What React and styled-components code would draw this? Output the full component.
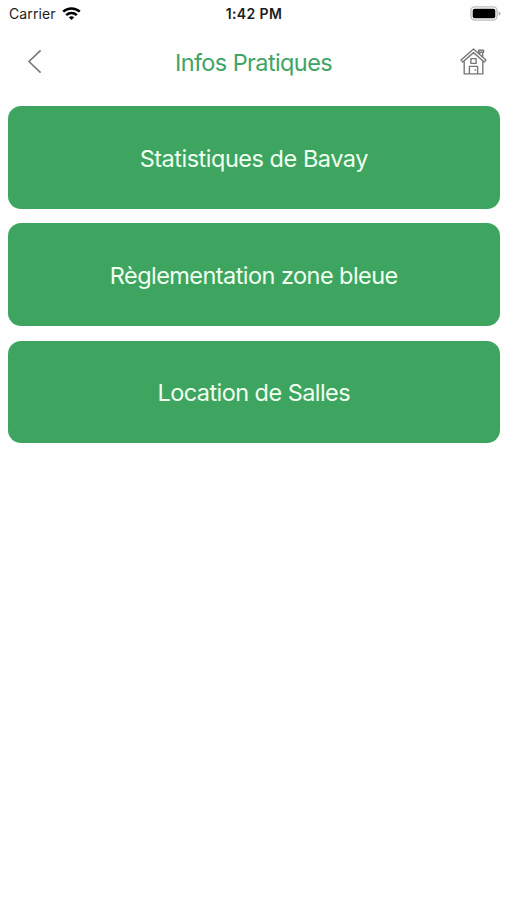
import React from 'react';
import styled, { createGlobalStyle } from 'styled-components';

const COLORS = {
  GREEN: '#3da560',
  TITLE: '#3fa564',
  GRAY: '#777777',
};

const GlobalStyle = createGlobalStyle`
  body {
    background: #fefefe;
    font-family: Inter, "Liberation Sans", sans-serif;
    margin: 0;
  }
`;

const Screen = styled.div`
  min-height: 900px;
  overflow: hidden;
`;

const StatusBar = styled.div`
  align-items: center;
  box-sizing: border-box;
  color: #1c1c1c;
  display: grid;
  grid-template-columns: 1fr auto 1fr;
  height: 27px;
  padding: 0 6px 0 9px;
`;

const Carrier = styled.div`
  align-items: center;
  display: flex;
  font-size: 14px;
  gap: 6px;
  letter-spacing: 0.1px;
`;

const Time = styled.div`
  font-size: 14px;
  font-weight: 600;
  letter-spacing: 0.4px;
  padding-right: 2px;
`;

const BatteryIcon = styled.svg`
  display: block;
  justify-self: end;
`;

const Header = styled.header`
  align-items: center;
  display: grid;
  grid-template-columns: 1fr auto 1fr;
  height: 71px;
  padding: 0 20px 0 27px;
`;

const IconButton = styled.button`
  background: none;
  border: 0;
  color: ${COLORS.GRAY};
  display: flex;
  justify-self: ${({ $align }) => $align};
  padding: 0 0 2px;
`;

const Title = styled.h1`
  color: ${COLORS.TITLE};
  font-size: 23.5px;
  font-weight: 400;
  letter-spacing: -0.6px;
  margin: 0 7px 0 0;
`;

const Menu = styled.nav`
  display: flex;
  flex-direction: column;
  gap: 14.7px;
  padding: 8px 7.5px 0 8px;
`;

const MenuButton = styled.button`
  background: ${COLORS.GREEN};
  border: 0;
  border-radius: 13px;
  color: #f1fff0;
  font-family: inherit;
  font-size: 23.5px;
  height: 102.6px;
  letter-spacing: ${({ $spacing }) => $spacing}px;
  padding: 2px 0 0;
`;

const ITEMS = [
  { label: 'Statistiques de Bavay', spacing: -0.48 },
  { label: 'Règlementation zone bleue', spacing: -0.55 },
  { label: 'Location de Salles', spacing: -0.56 },
];

const Wifi = () => (
  <svg width="19" height="14" viewBox="0 0 19 14" fill="none" stroke="#000" strokeWidth="2.5">
    <path d="M1.2 4.7C5.9 0.3 13.1 0.3 17.8 4.7" />
    <path d="M4.2 8.1C7.2 5.3 11.8 5.3 14.8 8.1" />
    <path d="M6.8 10.3Q9.5 8.1 12.2 10.3L9.5 13Z" fill="#000" stroke="none" />
  </svg>
);

const Battery = () => (
  <BatteryIcon width="31" height="15" viewBox="0 0 31 15">
    <rect x="0.9" y="0.9" width="26.2" height="13.2" rx="4" fill="#fff" stroke="#bdbdbd" strokeWidth="1.4" />
    <rect x="2.7" y="2.7" width="22.6" height="9.6" rx="2" fill="#000" />
    <path d="M28.7 5.2Q30.5 6 30.5 7.5T28.7 9.8Z" fill="#aaa" />
  </BatteryIcon>
);

const Back = () => (
  <svg width="15" height="25" viewBox="0 0 15 25" fill="none" stroke="currentColor" strokeWidth="1.6">
    <path d="M13.6 1.4L2 12.5L13.6 23.6" />
  </svg>
);

const Home = () => (
  <svg width="27" height="27" viewBox="0 0 27 27" fill="none" stroke="currentColor" strokeWidth="1.4" strokeLinejoin="round">
    <path d="M13.5 1.1L1.1 12.1L2.8 14L13.5 4.6L24.2 14L25.9 12.1Z" />
    <path d="M4.2 13.2V25.9H22.8V13.2" />
    <path d="M19.6 6.2V4.3M22.6 4.3V9M18.6 2.3H23.6V4.3H18.6Z" />
    <rect x="10.9" y="10.6" width="5.2" height="4.8" />
    <path d="M9.4 25.9V18.4H17.6V25.9M15.2 21.2V22.8" />
  </svg>
);

const App = () => (
  <Screen>
    <GlobalStyle />
    <StatusBar>
      <Carrier>
        Carrier
        <Wifi />
      </Carrier>
      <Time>1:42 PM</Time>
      <Battery />
    </StatusBar>
    <Header>
      <IconButton $align="start" aria-label="Retour">
        <Back />
      </IconButton>
      <Title>Infos Pratiques</Title>
      <IconButton $align="end" aria-label="Accueil">
        <Home />
      </IconButton>
    </Header>
    <Menu>
      {ITEMS.map(({ label, spacing }) => (
        <MenuButton key={label} $spacing={spacing}>{label}</MenuButton>
      ))}
    </Menu>
  </Screen>
);

export default App;
